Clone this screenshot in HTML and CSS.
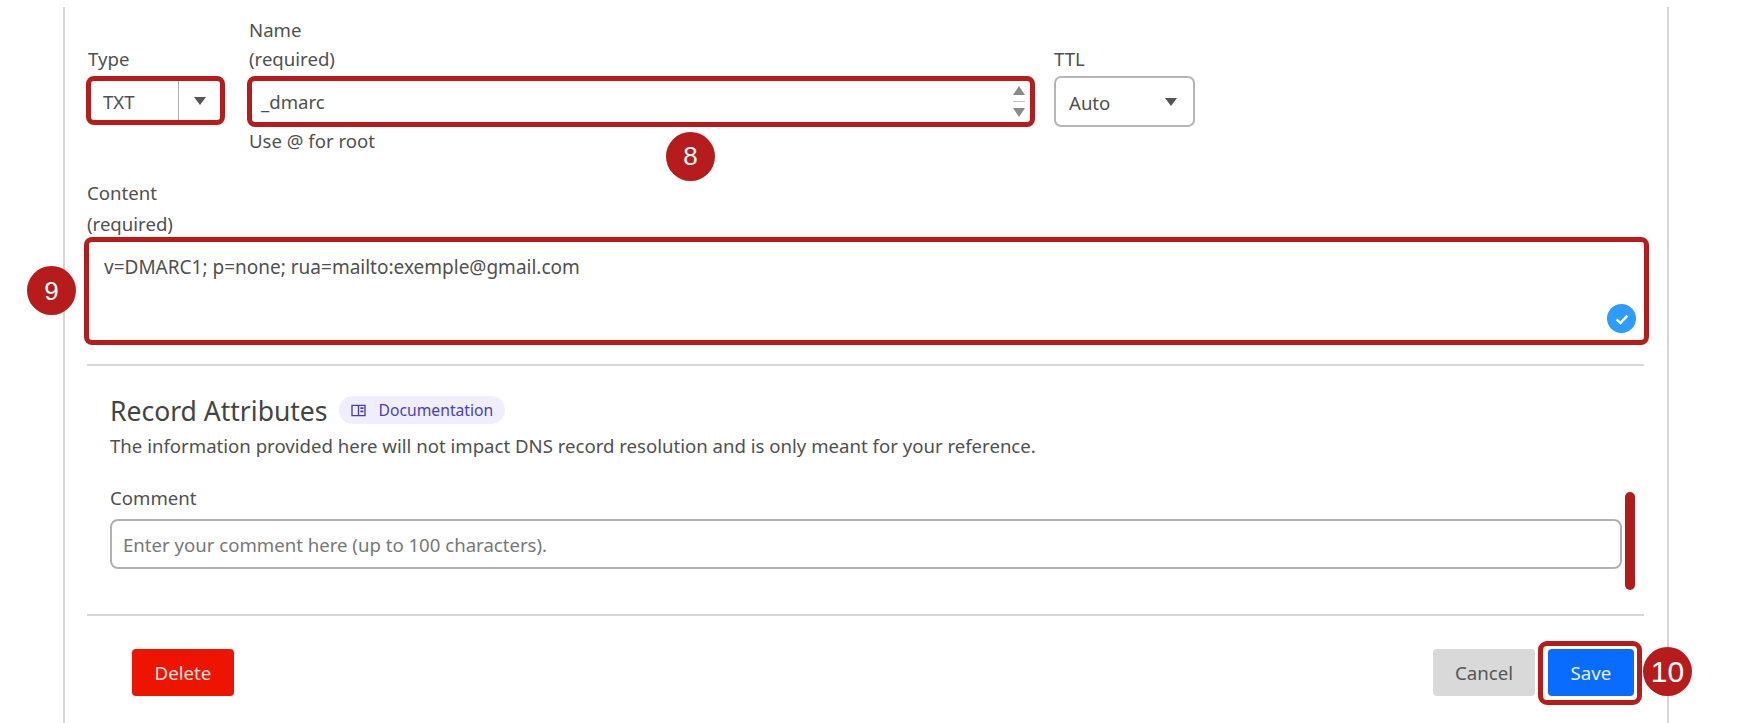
FILE: index.html
```html
<!DOCTYPE html>
<html lang="en">
  <head>
    <meta charset="UTF-8" />
    <meta name="viewport" content="width=device-width, initial-scale=1.0" />
    <title>DNS Record Edit</title>
    <link rel="stylesheet" href="styles.css">
  </head>
  <body>
    <main class="panel">
      <!-- Type / Name / TTL row -->
      <div class="record-row">
        <div class="col-type">
          <div class="field-label">Type</div>
          <div class="select select-type marked">
            <span class="select-value">TXT</span>
            <span class="select-btn"><span class="arrow-down"></span></span>
          </div>
        </div>
        <div class="col-name">
          <div class="field-label">Name<br />(required)</div>
          <div class="text-field marked">
            <span>_dmarc</span>
            <span class="spinner">
              <span class="spin-up"></span>
              <span class="spin-line"></span>
              <span class="spin-down"></span>
            </span>
            <span class="step-badge badge-8">8</span>
          </div>
          <div class="hint">Use @ for root</div>
        </div>
        <div class="col-ttl">
          <div class="field-label">TTL</div>
          <div class="select select-ttl">
            <span class="select-value">Auto</span>
            <span class="arrow-down"></span>
          </div>
        </div>
      </div>

      <!-- Content -->
      <div class="content-label">Content<br />(required)</div>
      <div class="content-box marked">
        v=DMARC1; p=none; rua=mailto:exemple@gmail.com
        <span class="step-badge badge-9">9</span>
        <span class="valid-check">
          <svg viewBox="0 0 16 16" width="18" height="18">
            <path d="M3.2 8.4 L6.6 11.6 L12.8 5" fill="none" stroke="#fff" stroke-width="2.2" />
          </svg>
        </span>
      </div>

      <hr class="divider divider-top" />

      <!-- Record attributes -->
      <section class="attributes">
        <div class="attributes-head">
          <h2>Record Attributes</h2>
          <span class="doc-pill">
            <svg viewBox="0 0 16 14" width="15" height="13">
              <path d="M1 1.5 H15 V12.5 H1 Z M8 1.5 V12.5" fill="none" stroke="#4b3fb8" stroke-width="1.5" />
              <path d="M10 3.6 H13.4 V5.4 H10 Z M10 7 H13.4 V8.8 H10 Z" fill="#4b3fb8" />
            </svg>
            Documentation
          </span>
        </div>
        <p class="attributes-note">The information provided here will not impact DNS record resolution and is only meant for your reference.</p>
        <div class="comment-label">Comment</div>
        <div class="comment-field">
          Enter your comment here (up to 100 characters).
          <span class="mark-bar"></span>
        </div>
      </section>

      <hr class="divider divider-bottom" />

      <!-- Buttons -->
      <footer class="actions">
        <button class="btn btn-delete">Delete</button>
        <div class="actions-right">
          <button class="btn btn-cancel">Cancel</button>
          <button class="btn btn-save">
            Save
            <span class="step-badge badge-10">10</span>
          </button>
        </div>
      </footer>
    </main>
  </body>
</html>
```

FILE: styles.css
```css
body {
  font-family: "Noto Sans", Arial, sans-serif;
  font-size: 18.6px;
  margin: 0;
  padding: 0;
  background: #fff;
  color: #505050;
  height: 723px;
  overflow: hidden;
}
.panel {
  width: 1557px;
  height: 716px;
  margin: 7px 0 0 63px;
  padding: 0 23px 0 22px;
  border-left: 2px solid #d6d6d6;
  border-right: 2px solid #d6d6d6;
}
/* Red outline from the tutorial */
.marked {
  border: 5px solid #b71c1c !important;
  border-radius: 8px;
}
.record-row {
  display: flex;
  align-items: flex-start;
  padding-top: 8px;
}
.col-type,
.col-name,
.col-ttl {
  display: flex;
  flex-direction: column;
}
.col-type {
  width: 139px;
  margin: 29px 22px 0 -1px;
}
.col-name {
  width: 788px;
  margin-right: 19px;
}
.col-ttl {
  width: 141px;
  margin-top: 29px;
}
.field-label {
  line-height: 29px;
  margin-bottom: 3px;
}
.col-type .field-label,
.col-name .field-label {
  padding-left: 2px;
}
.select {
  display: flex;
  align-items: center;
  box-sizing: border-box;
}
.select-type {
  height: 49px;
}
.select-type .select-value {
  flex: 1;
  padding: 2px 0 0 12px;
}
.select-btn {
  width: 41px;
  align-self: stretch;
  display: flex;
  align-items: center;
  justify-content: center;
  border-left: 1px solid #b0b0b0;
}
.select-ttl {
  height: 51px;
  justify-content: space-between;
  border: 2px solid #b5b5b5;
  border-radius: 7px;
  padding: 0 16px 0 13px;
}
.select-ttl .select-value {
  padding-top: 2px;
}
.arrow-down {
  width: 0;
  height: 0;
  border-left: 6.5px solid transparent;
  border-right: 6.5px solid transparent;
  border-top: 8px solid #555;
}
.text-field {
  position: relative;
  height: 51px;
  box-sizing: border-box;
  display: flex;
  align-items: center;
  justify-content: space-between;
  padding: 0 4px 0 9px;
}
.spinner {
  display: flex;
  flex-direction: column;
  align-items: center;
  gap: 6px;
  margin-right: 1px;
}
.spin-up,
.spin-down {
  width: 0;
  height: 0;
  border-left: 6px solid transparent;
  border-right: 6px solid transparent;
}
.spin-up {
  border-bottom: 9px solid #8a8a8a;
}
.spin-down {
  border-top: 9px solid #8a8a8a;
}
.spin-line {
  width: 12px;
  height: 1px;
  background: #c0c0c0;
}
.hint {
  padding-left: 2px;
  margin-top: -1px;
  line-height: 29px;
}
.content-label {
  margin-top: 22px;
  height: 60px;
  line-height: 31px;
}
.content-box {
  position: relative;
  box-sizing: border-box;
  width: 1565px;
  height: 108px;
  margin-left: -3px;
  padding: 12px 15px;
  font-size: 19px;
  line-height: 26px;
}
.valid-check {
  position: absolute;
  right: 8px;
  bottom: 7px;
  width: 29px;
  height: 29px;
  border-radius: 50%;
  background: #2e9bff;
  display: flex;
  align-items: center;
  justify-content: center;
}
.divider {
  border: none;
  height: 2px;
  background: #d6d6d6;
  margin: 0;
}
.divider-top {
  margin-top: 19px;
}
.divider-bottom {
  margin-top: 45px;
}
.attributes {
  padding: 27px 22px 0 23px;
}
.attributes-head {
  display: flex;
  align-items: center;
  gap: 11px;
  height: 36px;
}
.attributes-head h2 {
  margin: 0;
  font-size: 26.5px;
  font-weight: 400;
  color: #444;
}
.doc-pill {
  display: flex;
  align-items: center;
  gap: 13px;
  height: 28px;
  margin-top: -2px;
  padding: 0 12px 0 12px;
  border-radius: 14px;
  background: #f0eefc;
  color: #4b3fb8;
  font-size: 15.7px;
}
.attributes-note {
  margin: 4px 0 0;
  line-height: 26px;
}
.comment-label {
  margin-top: 26px;
  line-height: 26px;
}
.comment-field {
  position: relative;
  box-sizing: border-box;
  height: 50px;
  margin-top: 8px;
  padding: 0 11px;
  display: flex;
  align-items: center;
  border: 2px solid #b0b0b0;
  border-radius: 8px;
  color: #777;
}
.mark-bar {
  position: absolute;
  top: -29px;
  right: -15px;
  width: 10px;
  height: 98px;
  border-radius: 5px;
  background: #b01c1c;
}
.actions {
  display: flex;
  justify-content: space-between;
  margin-top: 33px;
  padding: 0 10px 0 45px;
}
.actions-right {
  display: flex;
  gap: 13px;
}
.btn {
  height: 47px;
  border: none;
  border-radius: 4px;
  font-family: inherit;
  font-size: 18.7px;
}
.btn-delete {
  width: 102px;
  background: #ee1500;
  color: #ffe6e0;
}
.btn-cancel {
  width: 102px;
  background: #d9d9d9;
  color: #555;
}
.btn-save {
  position: relative;
  width: 86px;
  background: #0a6cff;
  color: #e6f0ff;
}
.btn-save::after {
  content: "";
  position: absolute;
  inset: -8px -8px -9px -10px;
  border: 5px solid #b71c1c;
  border-radius: 9px;
}
/* Numbered step circles */
.step-badge {
  position: absolute;
  width: 49px;
  height: 49px;
  border-radius: 50%;
  background: #b71c1c;
  color: #fff;
  font-family: "Liberation Sans", Arial, sans-serif;
  font-size: 26px;
  display: flex;
  align-items: center;
  justify-content: center;
}
.badge-8 {
  left: 414px;
  top: 51px;
}
.badge-9 {
  left: -62px;
  top: 24px;
}
.badge-10 {
  left: 95px;
  top: -2px;
  font-size: 30px;
  z-index: 1;
}
```
